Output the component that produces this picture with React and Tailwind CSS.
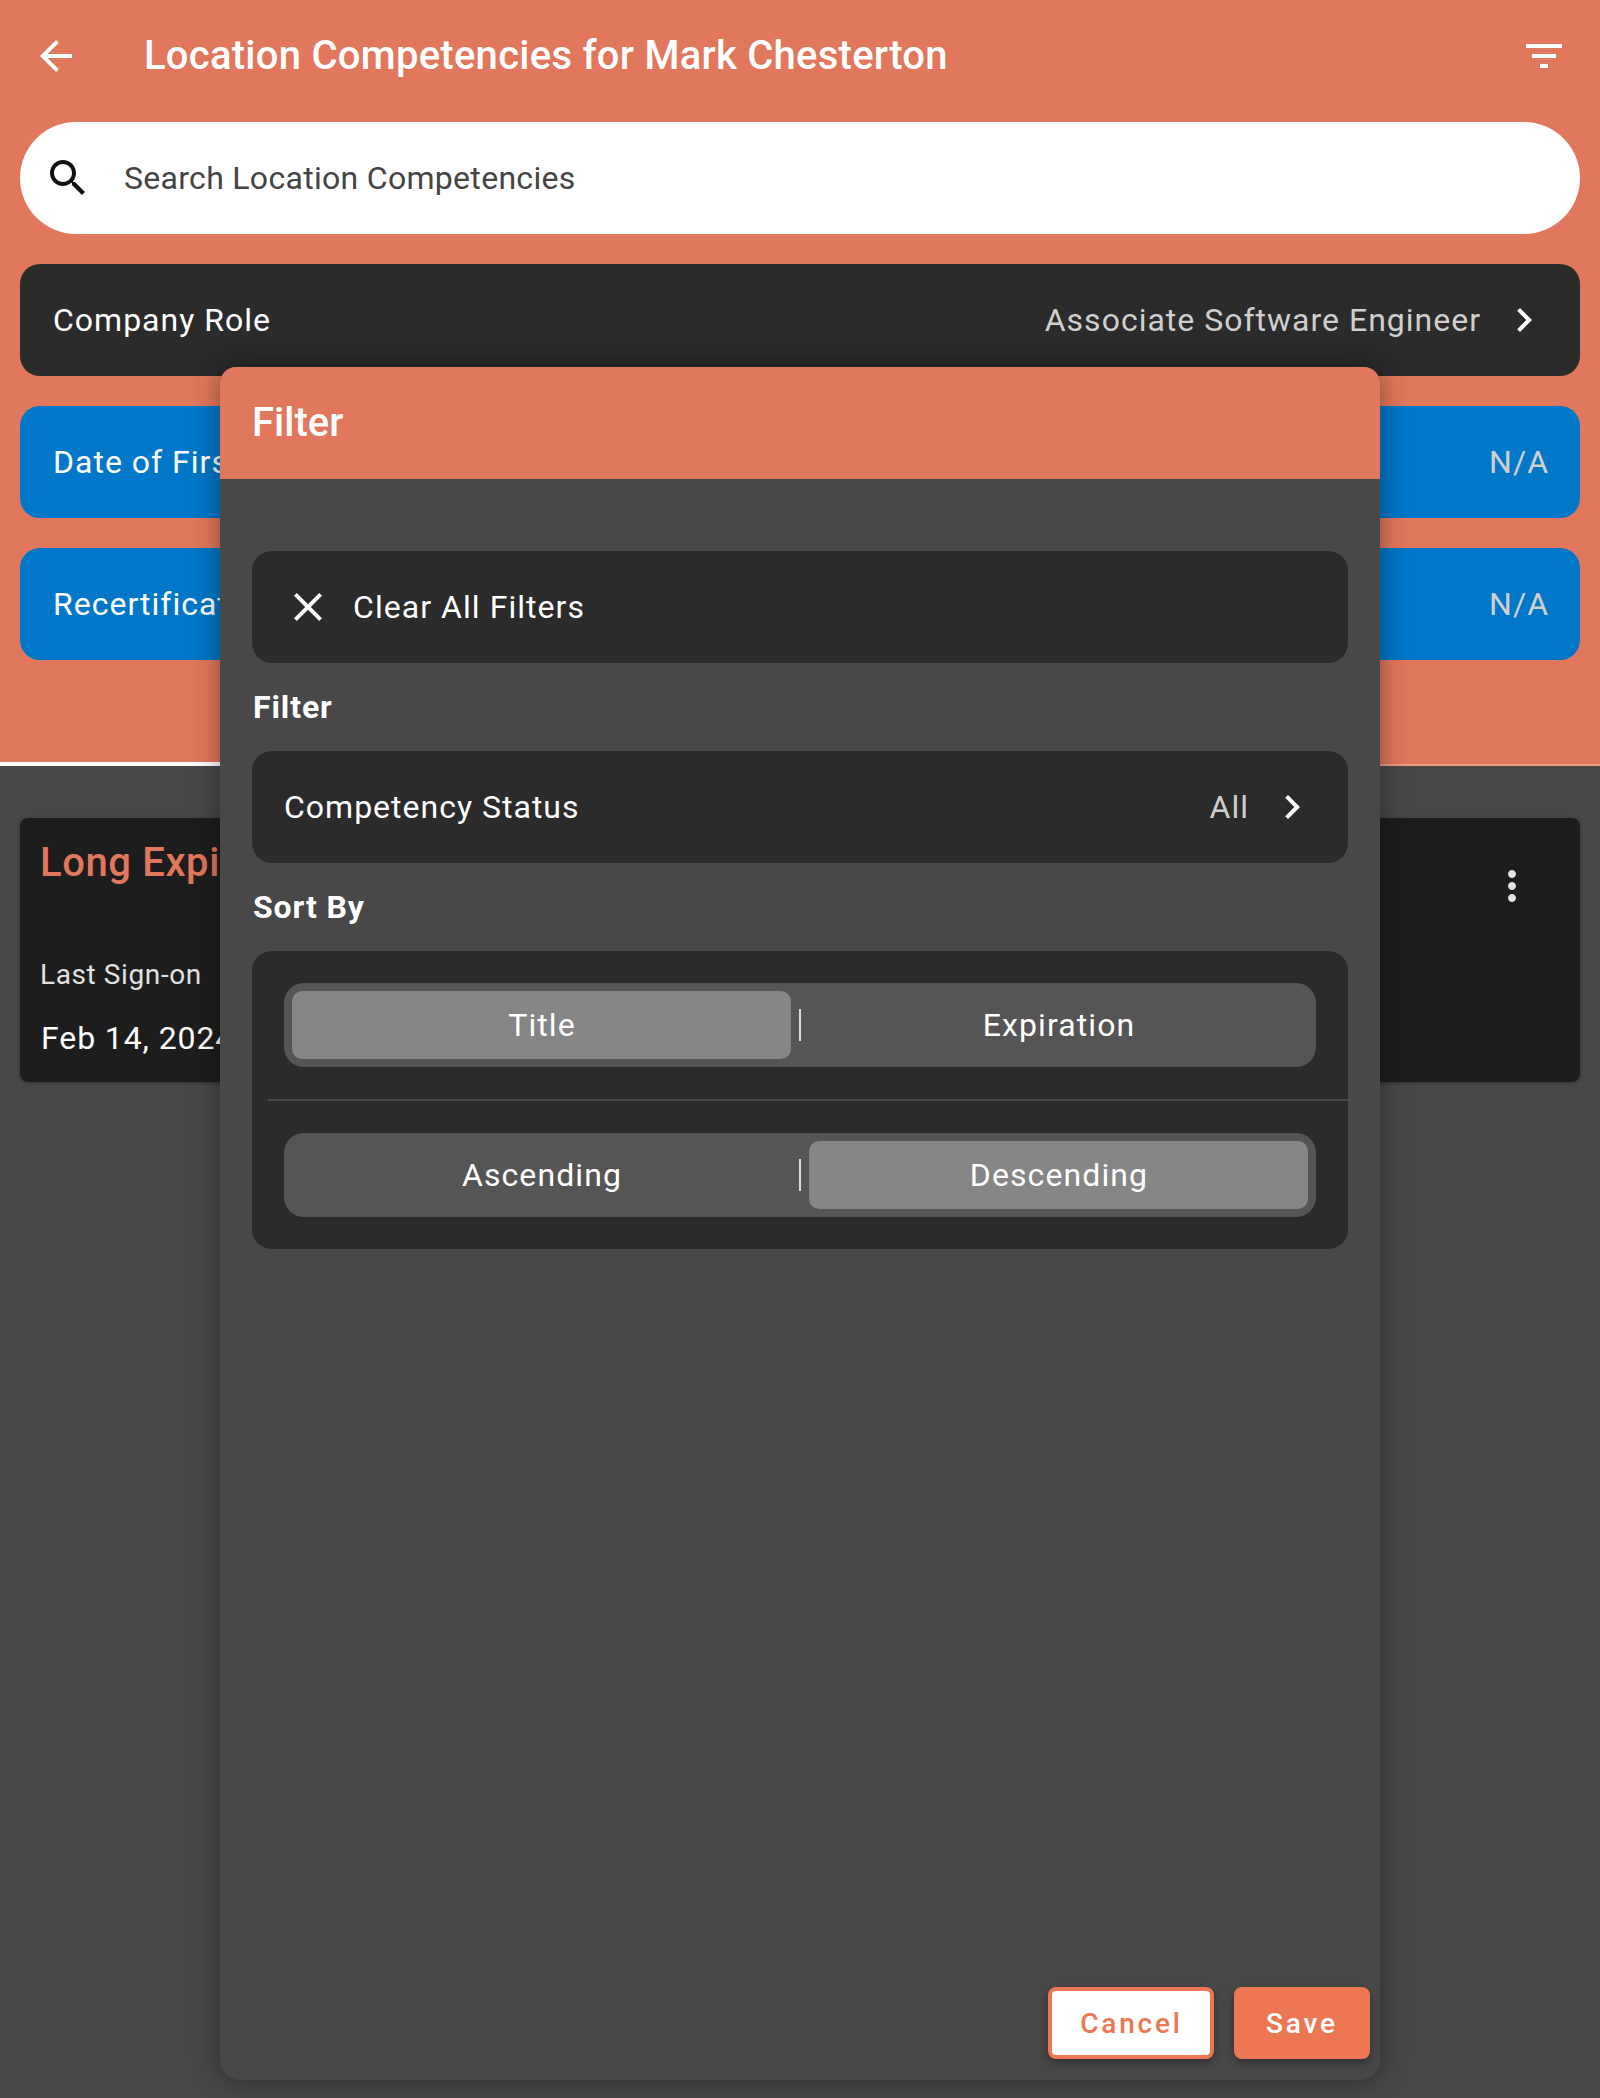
import React from "react";

const I = ({ d, className = "", fill = "currentColor" }) => (
  <svg viewBox="0 0 24 24" className={"block shrink-0 w-12 h-12 " + className} fill={fill}>
    <path d={d} />
  </svg>
);
const ARROW = "M20 11H7.83l5.59-5.59L12 4l-8 8 8 8 1.41-1.41L7.83 13H20v-2z";
const SEARCH = "M15.5 14h-.79l-.28-.27C15.41 12.59 16 11.11 16 9.5 16 5.91 13.09 3 9.5 3S3 5.91 3 9.5 5.91 16 9.5 16c1.61 0 3.09-.59 4.23-1.57l.27.28v.79l5 4.99L20.49 19l-4.99-5zm-6 0C7.01 14 5 11.99 5 9.5S7.01 5 9.5 5 14 7.01 14 9.5 11.99 14 9.5 14z";
const FILTER = "M10 18h4v-2h-4v2zM3 6v2h18V6H3zm3 7h12v-2H6v2z";
const CLOSE = "M19 6.41L17.59 5 12 10.59 6.41 5 5 6.41 10.59 12 5 17.59 6.41 19 12 13.41 17.59 19 19 17.59 13.41 12z";
const CHEVRON = "M10 6L8.59 7.41 13.17 12l-4.58 4.59L10 18l6-6z";
const MORE = "M12 8c1.1 0 2-.9 2-2s-.9-2-2-2-2 .9-2 2 .9 2 2 2zm0 2c-1.1 0-2 .9-2 2s.9 2 2 2 2-.9 2-2-.9-2-2-2zm0 6c-1.1 0-2 .9-2 2s.9 2 2 2 2-.9 2-2-.9-2-2-2z";

const Row = ({ label, value, blue, chevron }) => (
  <div className={"h-[112px] rounded-[20px] flex items-center justify-between pl-[33px] " + (blue ? "bg-[#0077c8] pr-[31px]" : "bg-[#2b2b2b] pr-8")}>
    <span className="text-[32px] leading-10 tracking-[1px] text-white">{label}</span>
    <span className="flex items-center">
      <span className="text-[32px] leading-10 tracking-[1px] text-[#cfcfcf]">{value}</span>
      {chevron && <I d={CHEVRON} className="ml-[19px] text-white" />}
    </span>
  </div>
);

const Segment = ({ a, b, selected }) => (
  <div className="mx-8 h-[84px] rounded-[20px] bg-[#555555] p-2 flex items-center">
    <div className={"flex-1 h-[68px] pl-px rounded-[10px] flex items-center justify-center text-[32px] tracking-[1.1px] text-white " + (selected === 0 ? "bg-[#868686]" : "")}>{a}</div>
    <div className="mx-2 w-[2px] h-8 bg-[#dddddd]" />
    <div className={"flex-1 h-[68px] pl-px rounded-[10px] flex items-center justify-center text-[32px] tracking-[1.1px] text-white " + (selected === 1 ? "bg-[#868686]" : "")}>{b}</div>
  </div>
);

export default function App() {
  return (
    <div className="relative min-h-[2098px] h-[2098px] overflow-hidden bg-[#484848] font-['Roboto',sans-serif]">
      <header className="h-[762px] bg-[#e1775c]">
        <div className="h-[112px] flex items-center pl-8 pr-8 mb-[10px]">
          <I d={ARROW} className="text-white" />
          <h1 className="ml-[64px] flex-1 text-[40px] leading-[48px] font-medium tracking-[0.26px] text-white">Location Competencies for Mark Chesterton</h1>
          <I d={FILTER} className="text-white" />
        </div>
        <div className="mx-5 flex flex-col gap-[30px]">
          <div className="h-[112px] rounded-[56px] bg-white flex items-center pl-6">
            <I d={SEARCH} className="text-[#111111]" />
            <span className="ml-[32px] text-[32px] leading-10 tracking-[0.3px] text-[#444444]">Search Location Competencies</span>
          </div>
          <Row label="Company Role" value="Associate Software Engineer" chevron />
          <Row label="Date of First Sign-on" value="N/A" blue />
          <Row label="Recertification Date" value="N/A" blue />
        </div>
      </header>
      <div className="flex h-1">
        <div className="w-1/2 bg-white" />
        <div className="w-1/2 border-b-2 border-[#ec9a80] bg-[#e1775c]" />
      </div>
      <main className="px-5 pt-[52px]">
        <div className="h-[264px] rounded-lg bg-[#1d1d1d] shadow-[0_1px_4px_rgba(0,0,0,0.3)] flex justify-between pl-[20px]">
          <div className="pt-[21px]">
            <div className="text-[40px] leading-[48px] font-medium tracking-[0.6px] text-[#e1775c]">Long Expiration</div>
            <div className="mt-[70px] text-[28px] leading-9 tracking-[0.6px] text-[#e0e0e0]">Last Sign-on</div>
            <div className="mt-[25px] pl-px text-[32px] leading-10 tracking-[0.9px] text-white">Feb 14, 2024</div>
          </div>
          <div className="pt-[44px] pr-[44px]">
            <I d={MORE} className="text-[#e0e0e0]" />
          </div>
        </div>
      </main>

      <aside className="absolute left-[220px] top-[367px] w-[1160px] h-[1713px] rounded-t-[16px] rounded-b-[20px] bg-[#484848] shadow-[0_0_28px_rgba(0,0,0,0.4)] flex flex-col overflow-hidden">
        <div className="h-[112px] shrink-0 bg-[#e1775c] flex items-center pl-8 text-[40px] font-medium text-white">Filter</div>
        <div className="flex-1 px-8 pt-[72px]">
          <div className="h-[112px] rounded-[20px] bg-[#2b2b2b] flex items-center pl-8">
            <I d={CLOSE} className="text-white" />
            <span className="ml-[21px] text-[32px] tracking-[1.05px] text-white">Clear All Filters</span>
          </div>
          <div className="h-[88px] flex items-center pl-px text-[32px] font-bold tracking-[0.9px] text-white">Filter</div>
          <div className="h-[112px] rounded-[20px] bg-[#2b2b2b] flex items-center justify-between pl-8 pr-8">
            <span className="text-[32px] tracking-[1px] text-white">Competency Status</span>
            <span className="flex items-center">
              <span className="text-[32px] tracking-[1px] text-[#cfcfcf]">All</span>
              <I d={CHEVRON} className="ml-[19px] text-white" />
            </span>
          </div>
          <div className="h-[88px] flex items-center pl-px text-[32px] font-bold tracking-[0.9px] text-white">Sort By</div>
          <div className="rounded-[20px] bg-[#2b2b2b] py-8">
            <Segment a="Title" b="Expiration" selected={0} />
            <div className="ml-4 my-8 h-[2px] bg-[#484848]" />
            <Segment a="Ascending" b="Descending" selected={1} />
          </div>
        </div>
        <div className="flex justify-end gap-5 pr-[10px] pb-[21px]">
          <button className="w-[166px] h-[72px] pt-px pl-px rounded-lg border-4 border-[#ed7753] bg-white text-[28px] font-medium tracking-[2.8px] text-[#ed7753] shadow-[0_4px_8px_rgba(0,0,0,0.35)]">Cancel</button>
          <button className="w-[136px] h-[72px] pt-px rounded-lg bg-[#ed7753] text-[28px] font-medium tracking-[2.8px] text-white shadow-[0_4px_8px_rgba(0,0,0,0.35)]">Save</button>
        </div>
      </aside>
    </div>
  );
}
